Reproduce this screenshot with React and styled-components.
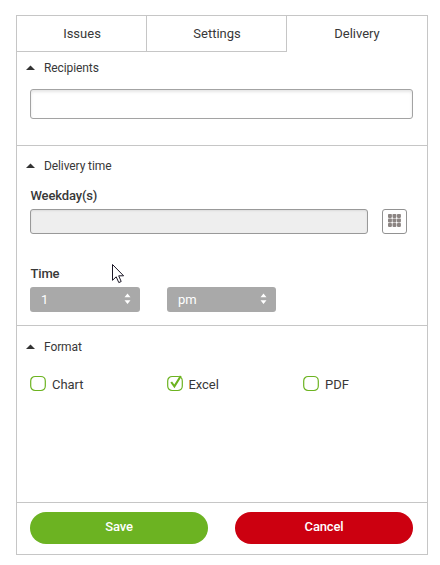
import React from "react";
import styled, { createGlobalStyle } from "styled-components";

const Global = createGlobalStyle`
  *, *::before, *::after { box-sizing: border-box; }
  body {
    margin: 0;
    background: #fff;
    color: #383838;
    font: 13px/16px Roboto, "Liberation Sans", sans-serif;
  }
`;

const LINE = "#c6c6c6";

const Panel = styled.main`
  position: relative;
  width: 412px;
  height: 540px;
  margin: 15px 0 0 16px;
  border: 1px solid ${LINE};
  display: flex;
  flex-direction: column;
`;

const Tabs = styled.nav`
  display: grid;
  grid-template-columns: 130px 140px 1fr;
  height: 36px;
  flex: none;
`;

const Tab = styled.button`
  appearance: none;
  margin: 0;
  padding: ${(p) => (p.$active ? "0 0 1px" : "1px 0 0 1px")};
  background: none;
  color: inherit;
  font: inherit;
  border: 0 solid ${LINE};
  border-width: ${(p) => (p.$active ? "0" : "0 1px 1px 0")};
`;

const Section = styled.section`
  height: ${(p) => p.$height}px;
  padding: ${(p) => p.$top}px 14px 0 13px;
  border-bottom: 1px solid ${LINE};
  flex: none;
`;

const Heading = styled.h2`
  display: flex;
  align-items: center;
  gap: 9px;
  margin: 0 0 0 -4px;
  font-size: 12px;
  font-weight: 400;
  letter-spacing: -0.1px;
  line-height: 16px;
  svg { display: block; }
`;

const TextInput = styled.input`
  display: block;
  width: 383px;
  height: 30px;
  margin-top: 13px;
  border: 1px solid #a3a3a3;
  border-radius: 3px;
  box-shadow: inset 0 2px 3px rgba(0, 0, 0, 0.1);
  background: #fff;
`;

const Label = styled.div`
  margin-top: ${(p) => p.$gap}px;
  padding-left: 0.5px;
  font-weight: 500;
  letter-spacing: -0.15px;
`;

const Row = styled.div`
  display: flex;
  gap: ${(p) => p.$gap}px;
  margin-top: 5px;
`;

const DayInput = styled.input`
  width: 338px;
  height: 25px;
  border: 1px solid #999;
  border-radius: 3px;
  background: #eee;
  box-shadow: inset 0 1px 2px rgba(0, 0, 0, 0.08);
`;

const GridButton = styled.button`
  width: 25px;
  height: 25px;
  padding: 0 0 2px 5px;
  border: 1px solid #929292;
  border-radius: 3px;
  background: #fff;
  svg { display: block; }
`;

const Select = styled.button`
  display: flex;
  justify-content: space-between;
  align-items: center;
  width: ${(p) => p.$width}px;
  height: 25px;
  padding: 0 9px 0 11px;
  border: 0;
  border-radius: 3px;
  background: #a9a9a9;
  color: #fff;
  font: 400 13px/16px Roboto, sans-serif;
  svg { display: block; margin-top: -2px; }
`;

const Options = styled.div`
  display: grid;
  grid-template-columns: 136.5px 136.5px auto;
  margin-top: 20px;
`;

const Option = styled.label`
  display: flex;
  align-items: flex-start;
  gap: 5px;
  letter-spacing: -0.05px;
  span { padding-top: 2px; }
  svg { display: block; overflow: visible; }
`;

const Footer = styled.footer`
  display: flex;
  gap: 27px;
  padding: 9px 13px;
`;

const Action = styled.button`
  width: 178px;
  height: 32px;
  padding: 0 0 3px;
  border: 0;
  border-radius: 16px;
  background: ${(p) => p.$color};
  color: #fff;
  font: 500 13px/16px Roboto, sans-serif;
  letter-spacing: -0.15px;
`;

const Pointer = styled.svg`
  position: absolute;
  left: 95px;
  top: 248px;
`;

const SectionTitle = ({ children }) => (
  <Heading>
    <svg width="9" height="6" viewBox="0 0 9 6">
      <path d="M0 5 4.5 .4 9 5Z" fill="#333" />
    </svg>
    {children}
  </Heading>
);

const Picker = ({ width, children }) => (
  <Select $width={width}>
    {children}
    <svg width="7" height="12" viewBox="0 0 7 12">
      <path d="M.5 4.3 3.5.5l3 3.8ZM.5 7.2h6l-3 3.8Z" fill="#fff" />
    </svg>
  </Select>
);

const Check = ({ checked, children }) => (
  <Option>
    <svg width="17" height="17" viewBox="0 0 17 17" fill="none" stroke="#6cb320">
      <rect x=".7" y="1.5" width="14.6" height="14" rx="4.4" strokeWidth="1.2" />
      {checked && <path d="M4.2 7 7.4 11.4 13.8 1" strokeWidth="2.1" />}
    </svg>
    <span>{children}</span>
  </Option>
);

export default function App() {
  return (
    <>
      <Global />
      <Panel>
        <Tabs>
          <Tab>Issues</Tab>
          <Tab>Settings</Tab>
          <Tab $active>Delivery</Tab>
        </Tabs>
        <Section $height={94} $top={8}>
          <SectionTitle>Recipients</SectionTitle>
          <TextInput />
        </Section>
        <Section $height={180} $top={12}>
          <SectionTitle>Delivery time</SectionTitle>
          <Label $gap={14}>Weekday(s)</Label>
          <Row $gap={14}>
            <DayInput disabled />
            <GridButton aria-label="Choose weekdays">
              <svg width="13" height="13" viewBox="0 0 13 13" fill="#8c8583">
                {[0, 4.5, 9].map((y) =>
                  [0, 4.5, 9].map((x) => (
                    <rect key={`${x}-${y}`} x={x} y={y} width="3.9" height="3.9" rx=".8" />
                  ))
                )}
              </svg>
            </GridButton>
          </Row>
          <Label $gap={32}>Time</Label>
          <Row $gap={27}>
            <Picker width={110}>1</Picker>
            <Picker width={109}>pm</Picker>
          </Row>
        </Section>
        <Section $height={177} $top={13}>
          <SectionTitle>Format</SectionTitle>
          <Options>
            <Check>Chart</Check>
            <Check checked>Excel</Check>
            <Check>PDF</Check>
          </Options>
        </Section>
        <Footer>
          <Action $color="#6cb322">Save</Action>
          <Action $color="#cc0010">Cancel</Action>
        </Footer>
        <Pointer width="14" height="21" viewBox="0 0 14 21">
          <path
            d="M.5.5V16.3L4.2 12.8 6.8 18.6 9.2 17.5 6.7 11.8H11.6Z"
            fill="#fff"
            stroke="#1b1726"
          />
        </Pointer>
      </Panel>
    </>
  );
}
